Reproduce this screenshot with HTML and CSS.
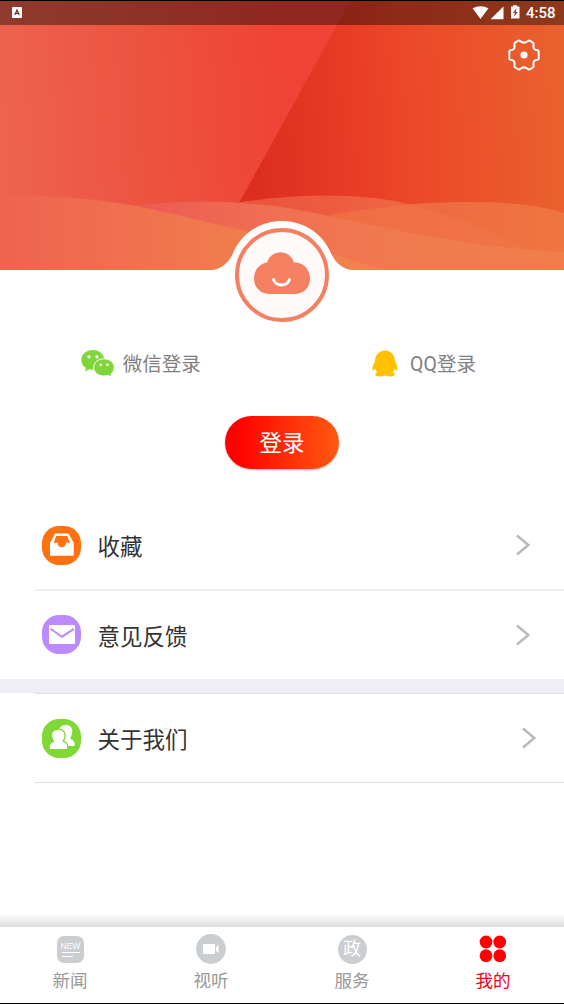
FILE: index.html
```html
<!DOCTYPE html>
<html lang="zh-CN">
<head>
<meta charset="utf-8">
<title>我的</title>
<link rel="stylesheet" href="styles.css">
</head>
<body>
<div class="screen">
  <header class="hero">
    <svg class="hero-art" width="564" height="269" viewBox="0 1 564 269">
      <defs>
        <linearGradient id="left" gradientUnits="userSpaceOnUse" x1="0" y1="110" x2="290" y2="90"><stop offset="0" stop-color="#ee634e"/><stop offset=".5" stop-color="#ec5341"/><stop offset="1" stop-color="#f04236"/></linearGradient>
        <linearGradient id="right" gradientUnits="userSpaceOnUse" x1="250" y1="135" x2="564" y2="120"><stop offset="0" stop-color="#dc2d1f"/><stop offset=".25" stop-color="#e73824"/><stop offset=".5" stop-color="#ec4728"/><stop offset="1" stop-color="#e9612e"/></linearGradient>
        <linearGradient id="w1" gradientUnits="userSpaceOnUse" x1="0" y1="0" x2="260" y2="0"><stop offset="0" stop-color="#ef6351"/><stop offset="1" stop-color="#f07f4c"/></linearGradient>
        <linearGradient id="w2" gradientUnits="userSpaceOnUse" x1="125" y1="0" x2="564" y2="0"><stop offset="0" stop-color="#ed5754"/><stop offset=".35" stop-color="#f07052"/><stop offset=".65" stop-color="#f07b4e"/><stop offset="1" stop-color="#f07e4a"/></linearGradient>
        <linearGradient id="w3" gradientUnits="userSpaceOnUse" x1="240" y1="0" x2="520" y2="0"><stop offset="0" stop-color="#e8543a"/><stop offset=".35" stop-color="#ee5c40"/><stop offset="1" stop-color="#f07c45"/></linearGradient>
        <linearGradient id="w4" gradientUnits="userSpaceOnUse" x1="300" y1="0" x2="564" y2="0"><stop offset="0" stop-color="#f0684a"/><stop offset=".45" stop-color="#ef6941"/><stop offset="1" stop-color="#ee7641"/></linearGradient>
      </defs>
      <path fill="url(#left)" d="M0 0H564V270H0Z"/>
      <path fill="url(#right)" d="M351 0H564V270H202Z"/>
      <path fill="url(#w4)" d="M305 221C380 205 420 202 470 202Q530 202 564 213V270H305Z"/>
      <path fill="url(#w3)" d="M240 202C295 194 365 192 410 205C455 216 495 232 536 254L564 270H240Z"/>
      <path fill="#f07346" opacity=".75" d="M305 221Q355 208 410 205C455 216 495 232 524 248L564 270H305Z"/>
      <path fill="url(#w2)" d="M122 208C175 199 225 200 282 207C360 220 440 246 564 252V270H122Z"/>
      <path fill="url(#w1)" d="M0 197C110 192 175 216 250 232Q310 248 385 270H0Z"/>
      <path fill="#f0824b" d="M320 250Q350 259 384 270H320Z"/>
      <path fill="#fff" d="M212 270C223 269 230 261 234 251C253 211 311 211 330 251C334 261 341 269 352 270Z"/>
    </svg>
    <div class="status">
      <svg class="status-app" width="10" height="11" viewBox="0 0 10 11"><rect width="10" height="11" rx="1" fill="#fff"/><path d="M2.7 8 5 3 7.3 8M3.6 6.4H6.4" fill="none" stroke="#7d352c" stroke-width="1.3"/></svg>
      <svg width="49" height="15" viewBox="0 0 49 15" fill="#fff"><path d="M.5 3.2Q8.500-.8 16.500 3.200L8.500 14ZM31.500 1.500V14.300H18.500ZM41 .2H45V1.500H47.500V13.500H39V1.500H41Z"/><path d="M44.600 3.500 40.800 7.800H43L41.800 11.700 45.800 7.100H43.600Z" fill="#8c351c"/></svg>
      <span class="clock">4:58</span>
    </div>
    <svg class="gear" width="32" height="32" viewBox="-16 -16 32 32"><path d="M-9-12.300L-6.500-14Q-5-15-3.600-13.800Q0-11 3.600-13.800Q5-15 6.500-14L9-12.300Q9.800-11.600 9.600-10.500C9-6.500 9.800-5.200 13.500-4.700Q14.600-4.500 14.700-3.300V3.300Q14.600 4.500 13.500 4.700C9.800 5.200 9 6.500 9.600 10.500Q9.800 11.600 9 12.300L6.500 14Q5 15 3.600 13.800Q0 11-3.600 13.800Q-5 15-6.500 14L-9 12.300Q-9.800 11.600-9.600 10.500C-9 6.500-9.800 5.200-13.500 4.700Q-14.600 4.500-14.700 3.300V-3.300Q-14.600-4.500-13.500-4.700C-9.800-5.200-9-6.500-9.600-10.500Q-9.800-11.600-9-12.300Z" fill="none" stroke="#fff" stroke-width="2"/><circle r="3.600" fill="#fff"/></svg>
    <div class="avatar">
      <svg width="56" height="44" viewBox="0 0 56 44"><path d="M15 43A15 15 0 0 1 0 28C0 18.500 6 12.500 13 11.500A14 14 0 0 1 40 11.500C49 11 56 18 56 27.500A15 15 0 0 1 41 43Z" fill="#f57f61"/><path d="M19.500 28.500Q21.500 34 27.500 34Q33.500 34 35.500 28.500" fill="none" stroke="#fff" stroke-width="2.800" stroke-linecap="round"/></svg>
    </div>
  </header>

  <main class="content">
    <div class="auth">
      <div class="auth-item">
        <svg width="34" height="28" viewBox="0 0 34 28"><path d="M12 0C5 0 .3 4.500.3 10Q.3 15 5 18L4 21.500 8.500 19.300Q11 20 14 19.600C19 19 23.300 15 23.300 10C23.300 4.500 18.500 0 12 0Z" fill="#7fd63a"/><path d="M22.800 8.800C17 8.800 12.700 12.700 12.700 17.500S17 26 22.800 26Q25 26 27 25.300L30.700 27.200 30 24Q33.300 21.500 33.300 17.500C33.300 12.700 29 8.800 22.800 8.800Z" fill="#7fd63a" stroke="#fff" stroke-width="1"/><g fill="#fff"><circle cx="8" cy="6.800" r="1.600"/><circle cx="16" cy="6.800" r="1.600"/><circle cx="19.800" cy="14.700" r="1.300"/><circle cx="26.500" cy="14.700" r="1.300"/></g></svg>
        <span>微信登录</span>
      </div>
      <div class="auth-item">
        <svg width="26" height="27" viewBox="0 0 26 27"><path d="M13 .5C6.500.5 3 5.500 3 11.500C1.500 13.500.3 17 .4 19.500Q.6 21.500 2 20L3.200 18.700Q4 21 5.300 22C2.500 23.500 2.500 26.500 7 26.500Q11 26.500 13 25.500Q15 26.500 19 26.500C23.500 26.500 23.500 23.500 20.700 22Q22 21 22.800 18.700L24 20Q25.400 21.500 25.600 19.500C25.700 17 24.500 13.500 23 11.500C23 5.500 19.500.5 13 .5Z" fill="#ffc100"/></svg>
        <span>QQ登录</span>
      </div>
    </div>
    <button class="login">登录</button>

    <nav class="menu">
      <a class="row">
        <svg width="39" height="39" viewBox="0 0 39 39"><rect width="39" height="39" rx="17" fill="#ff7010"/><path d="M13 7.500H26.500L31.800 17V29.700H8V17Z" fill="#fff"/><path d="M14.200 10H25.300L28 16.700H24.200Q23.200 21.300 19.800 21.300T15.400 16.700H11.700Z" fill="#ff7010"/></svg>
        <span>收藏</span>
        <svg class="chevron" width="14" height="22" viewBox="0 0 14 22"><path d="M1 1.500 12.300 11 1 20.500"/></svg>
      </a>
      <a class="row">
        <svg width="39" height="39" viewBox="0 0 39 39"><rect width="39" height="39" rx="17" fill="#bd89ff"/><rect x="7" y="10" width="26" height="19" rx="1" fill="#fff"/><path d="M8.500 13.800 20 21.700 32 13.800" fill="none" stroke="#bd89ff" stroke-width="2"/></svg>
        <span>意见反馈</span>
        <svg class="chevron" width="14" height="22" viewBox="0 0 14 22"><path d="M1 1.500 12.300 11 1 20.500"/></svg>
      </a>
      <div class="gap"></div>
      <a class="row row-about">
        <svg width="39" height="39" viewBox="0 0 39 39"><rect width="39" height="39" rx="17" fill="#80d836"/><path d="M24 6C29 6 31 10 30 14.500Q29.500 17 28.500 18.500Q28 20 29.500 20.500C32 21.500 33 23 32.700 27H22L17 10Q19 6 24 6Z" fill="#fff"/><path d="M16.300 10.800C21.500 10.800 23.500 15 22 19Q21.500 20.500 20.500 21.500Q20.500 22.500 21.500 23C24.500 24 25.700 26 25 30H8C7.300 26 8.500 24 11.500 23Q12.300 22.500 12.200 21.500Q11.100 20.500 10.600 19C9.100 15 11.100 10.800 16.300 10.800Z" fill="#fff" stroke="#80d836" stroke-width="2.800" paint-order="stroke"/></svg>
        <span>关于我们</span>
        <svg class="chevron" width="14" height="22" viewBox="0 0 14 22"><path d="M1 1.500 12.300 11 1 20.500"/></svg>
      </a>
    </nav>
  </main>

  <footer class="tabs">
    <a class="tab"><span class="tab-icon"><span class="news"><b>NEW</b><i></i><i class="short"></i></span></span>新闻</a>
    <a class="tab"><span class="tab-icon"><svg width="30" height="30" viewBox="0 0 30 30"><circle cx="15" cy="15" r="14.900" fill="#caced1"/><rect x="7" y="10" width="12" height="10" rx="1" fill="#fff"/><path d="M22.500 10.700V19.300Q19.500 17 19.500 15T22.500 10.700Z" fill="#fff"/></svg></span>视听</a>
    <a class="tab"><span class="tab-icon"><span class="gov">政</span></span>服务</a>
    <a class="tab active"><span class="tab-icon"><svg width="28" height="28" viewBox="0 0 28 28" fill="#fe0000"><circle cx="7" cy="7" r="6.400"/><circle cx="20.700" cy="7" r="6.400"/><circle cx="7" cy="20.700" r="6.400"/><circle cx="20.700" cy="20.700" r="6.400"/></svg></span>我的</a>
  </footer>
</div>
</body>
</html>
```
FILE: styles.css
```css
* { box-sizing: border-box; }
body { margin: 0; font-family: Roboto, "Noto Sans CJK SC", sans-serif; }
.screen {
  width: 564px;
  height: 1004px;
  display: flex;
  flex-direction: column;
  background: #fff;
  border-top: 1px solid #000;
  border-bottom: 1px solid #000;
  overflow: hidden;
}
.hero { position: relative; height: 269px; flex: none; }
.hero-art { display: block; }
.status {
  position: absolute;
  inset: 0 0 auto;
  height: 23.5px;
  padding: 0 8px 0 12px;
  display: flex;
  align-items: center;
  background: rgba(0, 0, 0, .4);
  color: #fff;
}
.status-app { margin-right: auto; }
.clock { width: 30px; margin-left: 5px; padding-top: 1px; font-size: 15px; font-weight: 500; line-height: 23px; white-space: nowrap; }
.gear { position: absolute; left: 508px; top: 38px; }
.avatar {
  position: absolute;
  left: 235px;
  top: 227px;
  width: 94px;
  height: 94px;
  border: 4px solid #f57f61;
  border-radius: 50%;
  background: #fffafa;
  display: flex;
  justify-content: center;
  padding-top: 19px;
}
.content { flex: 1; display: flex; flex-direction: column; padding-top: 72px; }
.auth { display: grid; grid-template-columns: 1fr 1fr; height: 42px; }
.auth-item {
  display: flex;
  align-items: center;
  justify-content: center;
  gap: 8px;
  color: #808080;
  font-size: 19.5px;
  line-height: 40px;
}
.auth-item span { padding-top: 3px; }
.auth-item:first-child { gap: 7.5px; }
.auth-item:last-child { gap: 12px; padding-left: 2px; }
.login {
  width: 114px;
  height: 53px;
  margin: 32px auto;
  padding: 2px 0 0;
  border: 0;
  border-radius: 27px;
  background: linear-gradient(90deg, #f00 10%, #ff5a10);
  box-shadow: 0 1px 2px rgba(0, 0, 0, .25);
  color: #fff;
  font: 22.5px/51px Roboto, "Noto Sans CJK SC", sans-serif;
}
.row {
  height: 89px;
  margin-left: 35px;
  padding: 0 34px 0 7px;
  display: flex;
  align-items: center;
  gap: 16.5px;
  color: #333;
  font-size: 22.5px;
}
.row:first-child { height: 90px; border-bottom: 2px solid #eee; }
.row:nth-child(2) { height: 88px; padding-bottom: 1px; }
.row-about { height: 90px; border-top: 1px solid #dedee0; border-bottom: 1px solid #dedede; padding-right: 28px; }
.chevron { margin-left: auto; fill: none; stroke: #bababa; stroke-width: 2.5; }
.gap { height: 14px; background: #efeef4; }
.tabs {
  position: relative;
  height: 76px;
  flex: none;
  display: grid;
  grid-template-columns: repeat(4, 1fr);
}
.tabs::before {
  content: "";
  position: absolute;
  left: 0;
  right: 0;
  bottom: 100%;
  height: 14px;
  background: linear-gradient(#fff, #dedede);
}
.tab {
  display: flex;
  flex-direction: column;
  align-items: center;
  padding: 5px 1px 0 0;
  color: #999;
  font-size: 17.5px;
  line-height: 26px;
}
.tab.active { color: #f60014; }
.tab-icon { height: 34px; margin-bottom: 2px; display: flex; align-items: center; }
.news {
  width: 27px;
  height: 27px;
  border-radius: 7px;
  background: #caced1;
  padding: 6px 4px;
  display: flex;
  flex-direction: column;
  color: #fff;
}
.news b, .news i { flex: none; }
.news b { font: 8.5px/8px "Liberation Sans", sans-serif; margin-bottom: 2px; }
.news i { height: 1px; background: #fff; margin-bottom: 3px; margin-left: 1px; }
.news .short { width: 11px; }
.gov {
  width: 29px;
  height: 29px;
  border-radius: 50%;
  background: #caced1;
  color: #fff;
  text-align: center;
  font-size: 18px;
  line-height: 28px;
}
```
